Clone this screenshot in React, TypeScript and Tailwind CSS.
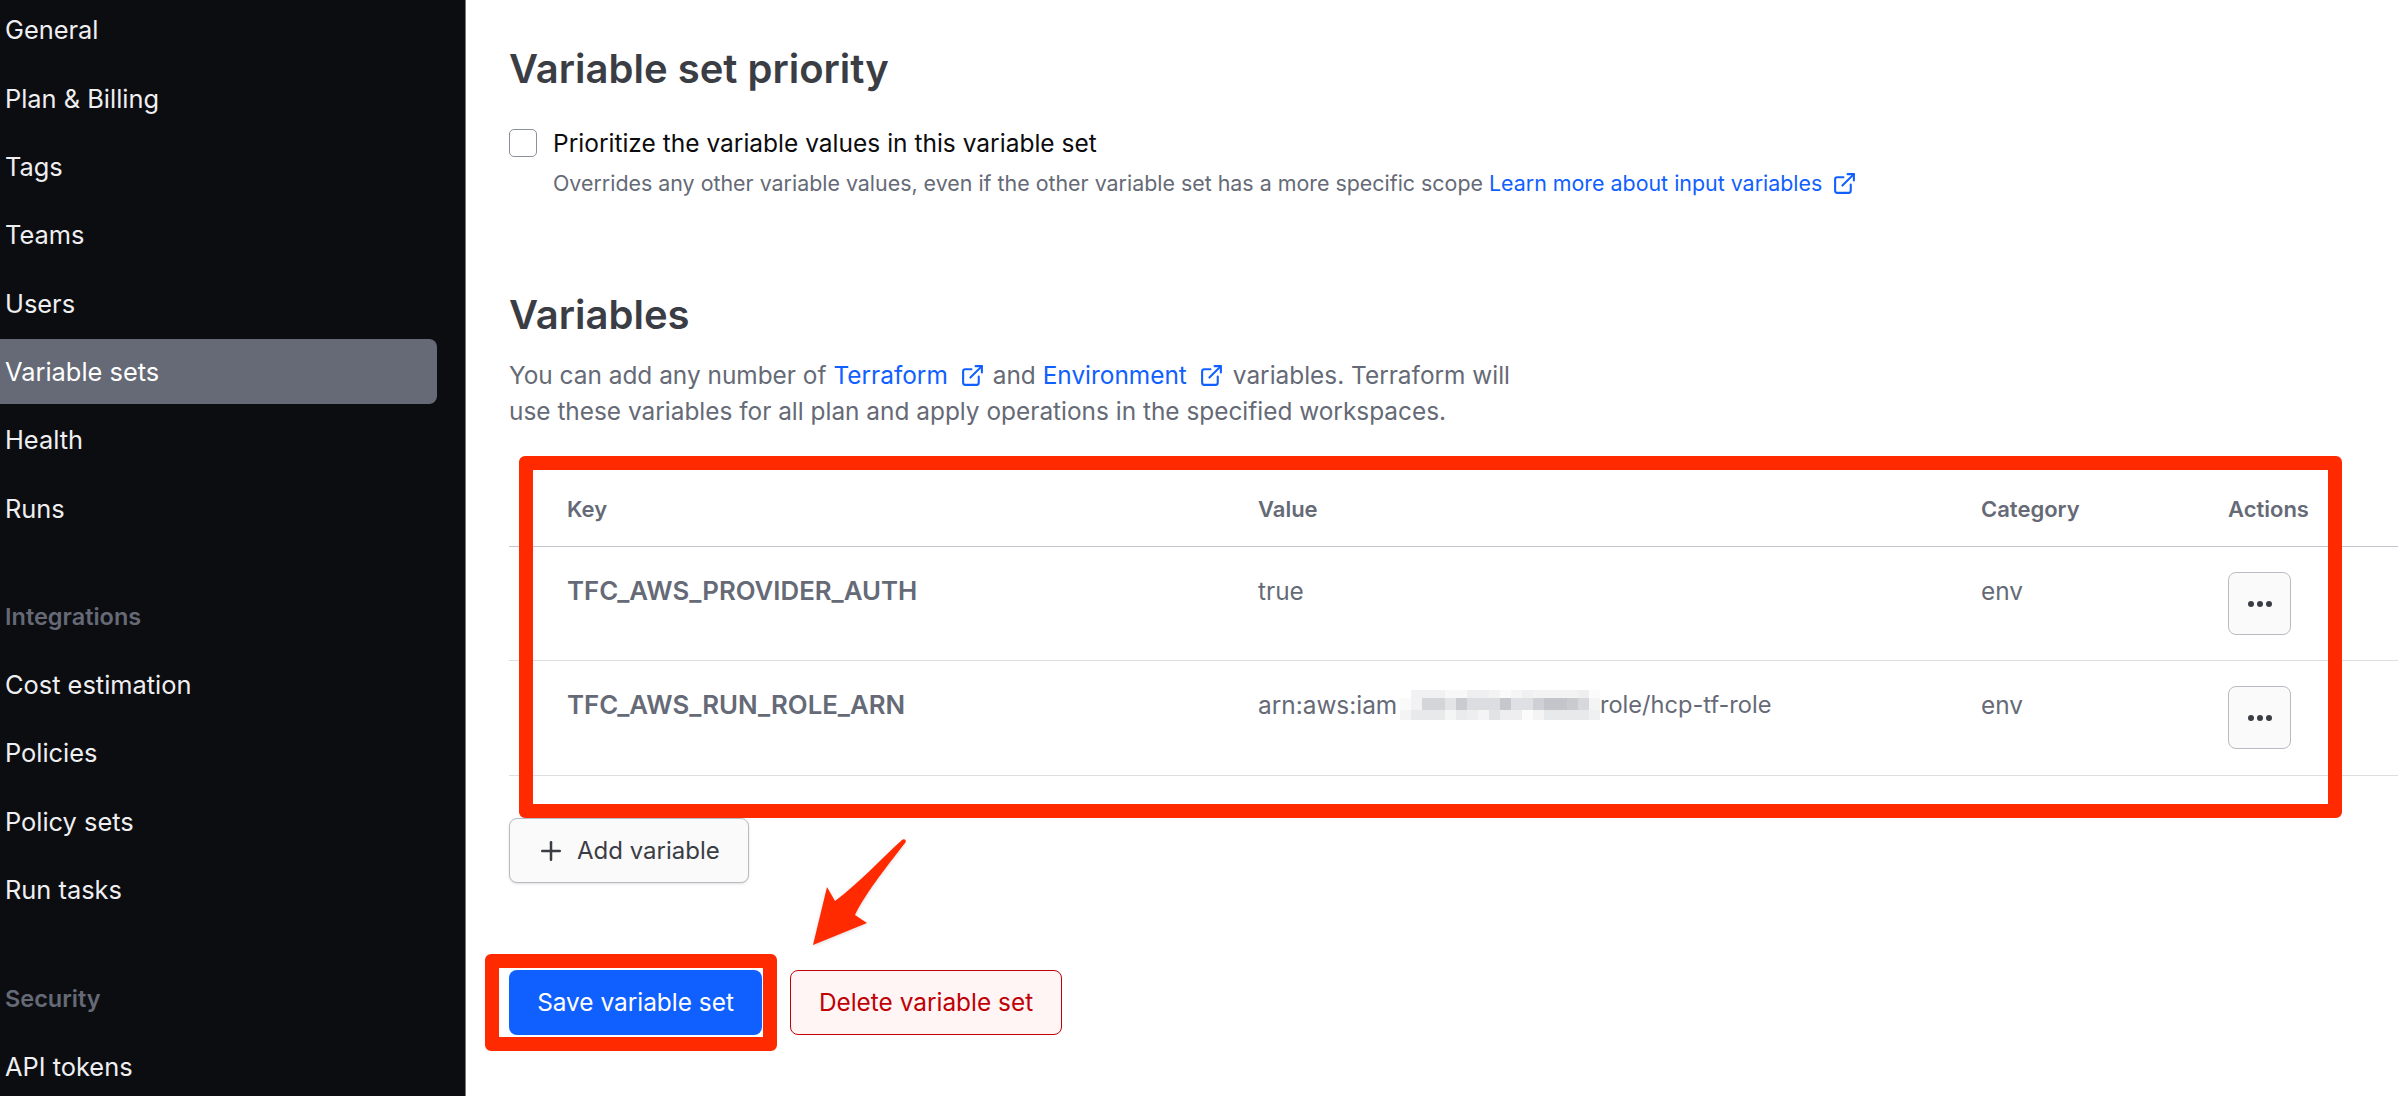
import React from 'react';
import { ExternalLink, Plus } from 'lucide-react';

const navTop = ['General', 'Plan & Billing', 'Tags', 'Teams', 'Users', 'Variable sets', 'Health', 'Runs'];
const navIntegrations = ['Cost estimation', 'Policies', 'Policy sets', 'Run tasks'];

// redacted account id in the ARN, pixelated
const blurRows = [
  { h: 'h-[8px]', cells: ['#ffffff', '#f1f1f3', '#f1f1f3', '#f1f1f3', '#f8f8f8', '#f8f8f8', '#efeff1', '#efeff1', '#f3f3f4', '#fafafa', '#f5f5f6', '#f0f0f2', '#f3f3f4', '#f3f3f4', '#f3f3f4', '#f3f3f4', '#efeff1', '#fbfbfb'] },
  { h: 'h-[12px]', cells: ['#fafafa', '#f2f2f3', '#d4d5d9', '#d4d5d9', '#e3e4e6', '#c9cbd0', '#dcdde0', '#dcdde0', '#dcdde0', '#c5c7cc', '#dfe0e3', '#dfe0e3', '#cfd0d5', '#c3c5ca', '#c3c5ca', '#c9cbcf', '#d7d8dc', '#f4f4f5'] },
  { h: 'h-[10px]', cells: ['#f4f4f5', '#e8e9eb', '#e8e9eb', '#e8e9eb', '#f5f5f6', '#eaebed', '#eeeef0', '#f4f4f5', '#e2e3e5', '#eeeef0', '#eeeef0', '#fbfbfb', '#f4f4f5', '#e8e9eb', '#e8e9eb', '#e8e9eb', '#e8e9eb', '#f0f0f2'] },
];

const NavItem = ({ label }: { label: string }) => (
  <div
    className={`h-[65px] flex items-center pl-[5px] rounded-r-lg w-[437px] text-[25.4px] ${
      label === 'Variable sets' ? 'bg-[#656a76] text-white' : 'text-[#efeff1]'
    }`}
  >
    {label}
  </div>
);

const SectionLabel = ({ label }: { label: string }) => (
  <div className="h-[65px] mt-10 flex items-center pl-[5px] text-[23.5px] font-semibold text-[#656a76]">{label}</div>
);

const Sidebar = () => (
  <aside className="w-[466px] shrink-0 h-full bg-[#0c0d10] border-r border-[#77797f] overflow-hidden">
    <div className="flex flex-col gap-[3.3px] -mt-[2px]">
      {navTop.map(item => <NavItem key={item} label={item} />)}
      <SectionLabel label="Integrations" />
      {navIntegrations.map(item => <NavItem key={item} label={item} />)}
      <SectionLabel label="Security" />
      <NavItem label="API tokens" />
    </div>
  </aside>
);

const MoreButton = () => (
  <button className="w-[63px] h-[63px] rounded-lg bg-[#fafafa] border border-[#b8bbc1] flex items-center justify-center gap-[3px]">
    <span className="w-[6px] h-[6px] rounded-full bg-[#3b3d45]" />
    <span className="w-[6px] h-[6px] rounded-full bg-[#3b3d45]" />
    <span className="w-[6px] h-[6px] rounded-full bg-[#3b3d45]" />
  </button>
);

const Row = ({ name, value, height }: { name: string; value: React.ReactNode; height: string }) => (
  <div className={`flex border-b border-[#dedfe3] text-[#656a76] leading-[36px] ${height}`}>
    <div className="w-[749px] pl-[58px] pt-[26px] font-semibold text-[25.8px]">{name}</div>
    <div className="w-[723px] pt-[26px] text-[24.4px]">{value}</div>
    <div className="w-[247px] pt-[26px] text-[24.4px]">env</div>
    <div className="pt-[25px]"><MoreButton /></div>
  </div>
);

export default function App() {
  return (
    <div className="relative w-[2400px] h-[1096px] overflow-hidden flex bg-white font-['Inter',sans-serif]">
      <Sidebar />
      <main className="flex-1 pl-[43px] pt-[45px]">
        <h2 className="text-[40px] leading-[48px] font-semibold text-[#3b3d45]">Variable set priority</h2>
        <div className="flex items-start gap-[16px] mt-[35px]">
          <div className="w-[28px] h-[28px] rounded-[5px] border border-[#8c909c] bg-white mt-[1px]" />
          <div>
            <p className="text-[24.5px] leading-[30px] text-[#0c0c0e]">Prioritize the variable values in this variable set</p>
            <p className="mt-[10px] text-[21.4px] leading-[30px] text-[#656a76] flex items-center">
              Overrides any other variable values, even if the other variable set has a more specific scope
              <span className="text-[#1060ff] ml-[6px]">Learn more about input variables</span>
              <ExternalLink className="w-[25px] h-[25px] ml-[10px] text-[#1060ff]" strokeWidth={2} />
            </p>
          </div>
        </div>

        <h2 className="mt-[93px] text-[40px] leading-[48px] font-semibold text-[#3b3d45]">Variables</h2>
        <div className="mt-[18px] text-[24.4px] leading-[36px] text-[#656a76]">
          <p className="flex items-center whitespace-pre">
            You can add any number of <span className="text-[#1060ff]">Terraform</span>
            <ExternalLink className="w-[25px] h-[25px] ml-[12px] mr-[8px] text-[#1060ff]" strokeWidth={2} />
            and <span className="text-[#1060ff]">Environment</span>
            <ExternalLink className="w-[25px] h-[25px] ml-[12px] mr-[9px] text-[#1060ff]" strokeWidth={2} />
            variables. Terraform will
          </p>
          <p>use these variables for all plan and apply operations in the specified workspaces.</p>
        </div>

        <div className="mt-[8px] w-[1889px]">
          <div className="flex h-[110px] border-b border-[#c2c5cb] items-start pt-[54px] text-[22px] leading-[36px] font-semibold text-[#656a76]">
            <div className="w-[749px] pl-[58px]">Key</div>
            <div className="w-[723px]">Value</div>
            <div className="w-[247px]">Category</div>
            <div>Actions</div>
          </div>
          <Row name="TFC_AWS_PROVIDER_AUTH" value="true" height="h-[114px]" />
          <Row
            name="TFC_AWS_RUN_ROLE_ARN"
            height="h-[115px]"
            value={
              <span className="flex items-center">
                arn:aws:iam
                <span className="flex flex-col ml-[3px]">
                  {blurRows.map((row, r) => (
                    <span key={r} className={`flex ${row.h}`}>
                      {row.cells.map((c, i) => (
                        <span key={i} className="w-[11.1px]" style={{ backgroundColor: c }} />
                      ))}
                    </span>
                  ))}
                </span>
                <span className="text-[23.6px]">role/hcp-tf-role</span>
              </span>
            }
          />
        </div>

        <button className="mt-[42px] w-[240px] h-[65px] rounded-lg bg-[#fafafa] border border-[#b8bbc1] shadow-sm flex items-center pl-[26px] text-[24px] text-[#3b3d45]">
          <Plus className="w-[30px] h-[30px] mr-[11px]" strokeWidth={2} />
          Add variable
        </button>

        <div className="mt-[87px] flex gap-[28px]">
          <button className="w-[253px] h-[65px] rounded-lg bg-[#1060ff] text-white text-[24.4px]">Save variable set</button>
          <button className="w-[272px] h-[65px] rounded-lg bg-[#fff5f5] border border-[#c00005] text-[#c00005] text-[24.4px]">Delete variable set</button>
        </div>
      </main>

      {/* annotations drawn on top of the screenshot */}
      <div className="absolute left-[519px] top-[456px] w-[1823px] h-[362px] border-[14px] border-[#ff2a00] rounded-md" />
      <div className="absolute left-[485px] top-[954px] w-[292px] h-[97px] border-[14px] border-[#ff2a00] rounded-md" />
      <svg className="absolute left-[800px] top-[830px] drop-shadow" width="120" height="125" viewBox="0 0 120 125">
        <path d="M13 115 L27 57 L35 71 C58 54 82 28 102 10 C105 8 107 11 105 13 C92 30 66 62 55 85 L67 93 Z" fill="#ff2a00" />
      </svg>
    </div>
  );
}
